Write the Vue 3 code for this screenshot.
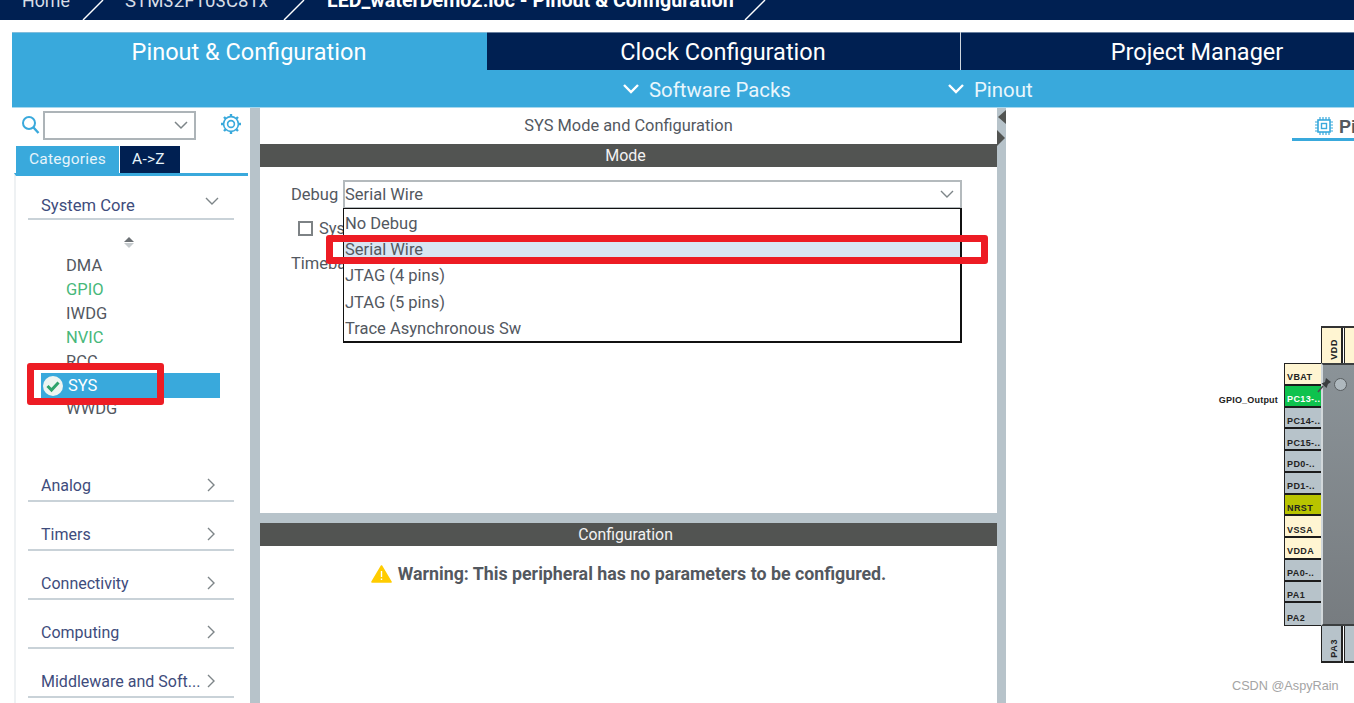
<script setup>
const sideItems = [
  { name: 'DMA' },
  { name: 'GPIO', cls: 'green' },
  { name: 'IWDG' },
  { name: 'NVIC', cls: 'green' },
  { name: 'RCC' },
  { name: 'SYS', cls: 'selected' },
  { name: 'WWDG' }
]
const groups = ['Analog', 'Timers', 'Connectivity', 'Computing', 'Middleware and Soft...']
const options = ['No Debug', 'Serial Wire', 'JTAG (4 pins)', 'JTAG (5 pins)', 'Trace Asynchronous Sw']
const pins = [
  { n: 'VBAT', c: 'power' },
  { n: 'PC13-..', c: 'active' },
  { n: 'PC14-..', c: 'io' },
  { n: 'PC15-..', c: 'io' },
  { n: 'PD0-..', c: 'io' },
  { n: 'PD1-..', c: 'io' },
  { n: 'NRST', c: 'reset' },
  { n: 'VSSA', c: 'power' },
  { n: 'VDDA', c: 'power' },
  { n: 'PA0-..', c: 'io' },
  { n: 'PA1', c: 'io' },
  { n: 'PA2', c: 'io' }
]
</script>

<template>
  <div class="app">
    <header class="crumbs">
      <span class="crumb c1">Home</span>
      <svg class="slash" width="24" height="20" viewBox="0 0 24 20"><path d="M2 20 L22 0" stroke="#fff" stroke-width="1.4" /></svg>
      <span class="crumb c2">STM32F103C8Tx</span>
      <svg class="slash" width="24" height="20" viewBox="0 0 24 20"><path d="M2 20 L22 0" stroke="#fff" stroke-width="1.4" /></svg>
      <span class="crumb c3">LED_waterDemo2.ioc - Pinout &amp; Configuration</span>
      <svg class="slash" width="24" height="20" viewBox="0 0 24 20"><path d="M2 20 L22 0" stroke="#fff" stroke-width="1.4" /></svg>
    </header>

    <div class="workspace">
      <nav class="tabs">
        <div class="tab tab-active">Pinout &amp; Configuration</div>
        <div class="tab tab-clock">Clock Configuration</div>
        <div class="tab tab-project">Project Manager</div>
      </nav>
      <div class="subbar">
        <div class="sub sub-packs">
          <svg width="18" height="12" viewBox="0 0 18 12"><path d="M2 2 L9 9 L16 2" fill="none" stroke="#fff" stroke-width="2.4" /></svg>
          <span>Software Packs</span>
        </div>
        <div class="sub sub-pinout">
          <svg width="18" height="12" viewBox="0 0 18 12"><path d="M2 2 L9 9 L16 2" fill="none" stroke="#fff" stroke-width="2.4" /></svg>
          <span>Pinout</span>
        </div>
      </div>

      <main class="main">
        <aside class="sidebar">
          <div class="search">
            <svg class="lens" width="19" height="20" viewBox="0 0 19 20"><circle cx="8" cy="8" r="6" fill="none" stroke="#39a9dc" stroke-width="2" /><path d="M12.5 12.5 L17.5 18" stroke="#39a9dc" stroke-width="2.4" /></svg>
            <div class="search-box">
              <svg width="14" height="9" viewBox="0 0 14 9"><path d="M1 1 L7 7 L13 1" fill="none" stroke="#7d8588" stroke-width="1.5" /></svg>
            </div>
            <svg class="gear" width="22" height="22" viewBox="0 0 22 22">
              <circle cx="11" cy="11" r="7.4" fill="none" stroke="#39a9dc" stroke-width="1.6" />
              <circle cx="11" cy="11" r="3.4" fill="none" stroke="#39a9dc" stroke-width="1.6" />
              <path d="M11 1v3M11 18v3M1 11h3M18 11h3M4 4l2 2M16 16l2 2M18 4l-2 2M6 16l-2 2" stroke="#39a9dc" stroke-width="2.4" />
            </svg>
          </div>
          <div class="side-tabs">
            <div class="side-tab st-on">Categories</div>
            <div class="side-tab st-off">A-&gt;Z</div>
          </div>
          <div class="side-list">
            <div class="group group-open">
              <span>System Core</span>
              <svg width="14" height="9" viewBox="0 0 14 9"><path d="M1 1 L7 7 L13 1" fill="none" stroke="#7d8588" stroke-width="1.4" /></svg>
            </div>
            <div class="scroller">
              <i class="tri-up"></i><i class="tri-down"></i>
            </div>
            <ul class="items">
              <li v-for="it in sideItems" :key="it.name" class="item" :class="it.cls">
                <svg v-if="it.cls === 'selected'" class="check" width="20" height="20" viewBox="0 0 20 20">
                  <circle cx="10" cy="10" r="10" fill="#eef5f1" />
                  <path d="M4.5 10 L8.5 14 L15.5 6.5" fill="none" stroke="#2fa36b" stroke-width="3" />
                </svg>
                <span>{{ it.name }}</span>
              </li>
            </ul>
            <div class="closed-groups">
              <div v-for="g in groups" :key="g" class="group">
                <span>{{ g }}</span>
                <svg width="9" height="14" viewBox="0 0 9 14"><path d="M1 1 L7 7 L1 13" fill="none" stroke="#7d8588" stroke-width="1.4" /></svg>
              </div>
            </div>
          </div>
        </aside>

        <section class="center">
          <div class="mode-panel">
            <div class="panel-title">SYS Mode and Configuration</div>
            <div class="bar">Mode</div>
            <div class="mode-body">
              <div class="debug-row">
                <label class="debug-label">Debug</label>
                <div class="select">
                  <span>Serial Wire</span>
                  <svg width="14" height="9" viewBox="0 0 14 9"><path d="M1 1 L7 7 L13 1" fill="none" stroke="#7d8588" stroke-width="1.4" /></svg>
                </div>
              </div>
              <div class="check-row"><i class="checkbox"></i><span>Sys</span></div>
              <div class="time-row">Timeba</div>
              <ul class="dropdown">
                <li v-for="o in options" :key="o" class="option" :class="{ hot: o === 'Serial Wire' }">{{ o }}</li>
              </ul>
            </div>
          </div>
          <div class="config-panel">
            <div class="bar bar-config">Configuration</div>
            <div class="warning">
              <svg width="21" height="18" viewBox="0 0 21 18"><path d="M10.5 1 L20 17 L1 17 Z" fill="#ffcc00" stroke="#ffcc00" stroke-width="1.6" stroke-linejoin="round" /><path d="M10.5 6 V12 M10.5 13.5 V15" stroke="#fff" stroke-width="1.4" /></svg>
              <span>Warning: This peripheral has no parameters to be configured.</span>
            </div>
          </div>
        </section>

        <div class="gutter">
          <i class="arrow-left"></i>
          <i class="arrow-right"></i>
        </div>

        <section class="right">
          <div class="pin-tab">
            <svg width="18" height="18" viewBox="0 0 18 18">
              <rect x="3" y="3" width="12" height="12" fill="none" stroke="#39a9dc" stroke-width="1.6" />
              <rect x="6.5" y="6.5" width="5" height="5" fill="none" stroke="#39a9dc" stroke-width="1.4" />
              <path d="M5 0v3M8 0v3M11 0v3M14 0v3M5 15v3M8 15v3M11 15v3M14 15v3M0 5h3M0 8h3M0 11h3M0 14h3M15 5h3M15 8h3M15 11h3M15 14h3" stroke="#39a9dc" stroke-width="1.2" />
            </svg>
            <b>Pi</b>
          </div>
          <div class="diagram">
            <div class="top-pins">
              <div class="vpin power"><span>VDD</span></div>
              <div class="vpin power"><span></span></div>
            </div>
            <div class="out-label">GPIO_Output</div>
            <div class="pins">
              <div v-for="p in pins" :key="p.n" class="pin" :class="p.c">{{ p.n }}</div>
            </div>
            <div class="chip">
              <i class="dot"></i>
              <svg class="push" width="16" height="16" viewBox="0 0 16 16"><path d="M9 1 L14 5 L11 7 L9.5 11 L4.5 6.5 L8 5 Z" fill="#3a3d3f" /><path d="M6 9 L1 15" stroke="#4a4d4f" stroke-width="1.6" /></svg>
            </div>
            <div class="bottom-pins">
              <div class="vpin io"><span>PA3</span></div>
              <div class="vpin io"><span></span></div>
            </div>
          </div>
        </section>
      </main>
    </div>

    <div class="red red-sys"></div>
    <div class="red red-serial"></div>
    <div class="watermark">CSDN @AspyRain</div>
  </div>
</template>

<style>
html, body { margin: 0; padding: 0; overflow: hidden; background: #fff; }
</style>

<style scoped>
.app {
  position: relative;
  width: 1354px;
  height: 703px;
  overflow: hidden;
  background: #fff;
  font-family: Roboto, "Liberation Sans", sans-serif;
  color: #53585f;
}
.crumbs {
  height: 20px;
  background: #002052;
  display: flex;
  align-items: flex-end;
  overflow: hidden;
  color: #fff;
}
.crumb { line-height: 20px; position: relative; top: -9px; white-space: nowrap; }
.c1 { margin-left: 22px; width: 59px; color: #d7dde6; font-size: 17.8px; }
.c2 { margin-left: 20px; width: 157px; color: #d7dde6; font-size: 18.6px; }
.c3 { margin-left: 21px; width: 416px; font-weight: 700; font-size: 19.7px; }
.slash { flex: none; }

.workspace { margin: 12px 0 0 12px; height: 671px; display: flex; flex-direction: column; }
.tabs { height: 38px; display: flex; flex: none; }
.tab {
  display: flex; align-items: center; justify-content: center;
  color: #fff; font-size: 23.5px; font-weight: 400; padding-top: 1px; box-sizing: border-box;
  box-shadow: inset 0 1px 0 rgba(190, 205, 220, 0.55);
}
.tab-active { width: 475px; background: #39a9dc; padding-right: 1px; }
.tab-clock { width: 474px; background: #002052; border-right: 1px solid #cfd6de; padding-right: 1px; }
.tab-project { flex: 1; background: #002052; padding-left: 79px; }
.subbar { height: 37px; flex: none; background: #39a9dc; display: flex; color: #e9f6fc; font-size: 20.4px; border-bottom: 1px solid #a7d8ee; box-sizing: content-box; }
.sub { display: flex; align-items: center; gap: 9px; }
.sub-packs { margin-left: 610px; width: 325px; }
.sub span { position: relative; top: 1px; }
.sub svg { flex: none; }

.main { flex: 1; display: flex; min-height: 0; }
.sidebar { width: 238px; flex: none; border-right: 10px solid #b7c3ca; box-sizing: content-box; background: #fff; display: flex; flex-direction: column; }
.search { height: 34px; flex: none; display: flex; align-items: flex-start; padding: 2px 0 0 9px; box-sizing: border-box; }
.lens { margin-top: 5px; }
.search-box {
  margin-left: 3px; margin-top: 1px; border: 2px solid #adb4b8; width: 153px; height: 29px;
  display: flex; align-items: center; justify-content: flex-end; padding-right: 6px; box-sizing: border-box;
}
.gear { margin: 3px 0 0 24px; }
.side-tabs { display: flex; height: 27px; margin: 4px 0 0 4px; flex: none; }
.side-tab { display: flex; align-items: center; justify-content: center; color: #e6f4fb; font-size: 15.5px; letter-spacing: 0.25px; padding-bottom: 1px; box-sizing: border-box; }
.st-on { width: 103px; background: #39a9dc; }
.st-off { width: 60px; background: #002052; margin-left: 1px; padding-right: 3px; }
.side-list {
  flex: 1; margin: 0 2px 0 2px; border-top: 3px solid #39a9dc; padding: 0 14px 0 12px; border-left: 2px solid #eef1f3;
  background: #fff; box-sizing: border-box; min-height: 0; overflow: hidden;
}
.group {
  height: 37px; box-sizing: border-box; display: flex; justify-content: space-between; align-items: flex-end;
  border-bottom: 2px solid #c9d2d8; padding: 0 15px 5px 13px; font-size: 16px; color: #3e4c7c; margin-top: 12px; white-space: nowrap;
}
.group-open { height: 44px; margin-top: 0; padding-bottom: 3px; font-size: 16.6px; }
.group-open svg { margin-bottom: 9px; }
.closed-groups .group { height: 37px; }
.closed-groups .group svg { margin-bottom: 3px; margin-right: 3px; }
.closed-groups .group:first-child { margin-top: 0; }
.scroller { display: flex; flex-direction: column; align-items: center; gap: 1px; height: 24px; padding: 17px 0 0 0; padding-right: 4px; box-sizing: content-box; }
.tri-up { width: 0; height: 0; border-left: 5px solid transparent; border-right: 5px solid transparent; border-bottom: 5px solid #6c7175; }
.tri-down { width: 0; height: 0; border-left: 5px solid transparent; border-right: 5px solid transparent; border-top: 5px solid #c6cbce; }
.items { list-style: none; margin: -7px 0 0 0; padding: 0; height: 211px; }
.item { height: 24px; line-height: 24px; font-size: 16.5px; padding-left: 38px; color: #53585f; }
.item.green { color: #47b87a; }
.item.selected {
  height: 25px; margin: -1px 0 -1px 13px; padding-left: 2px; width: 179px; box-sizing: border-box; background: #39a9dc; color: #fff;
  display: flex; align-items: center; gap: 5px; position: relative;
}
.check { flex: none; }

.center { width: 737px; flex: none; display: flex; flex-direction: column; background: #b7c3ca; }
.mode-panel { height: 405px; flex: none; background: #fff; display: flex; flex-direction: column; }
.panel-title { height: 35px; flex: none; display: flex; align-items: center; justify-content: center; font-size: 16.4px; color: #53585f; padding-bottom: 1px; box-sizing: content-box; }
.bar { height: 23px; flex: none; background: #525452; color: #f2f2f2; font-size: 16px; display: flex; align-items: center; justify-content: center; padding-right: 6px; }
.bar-config { font-size: 15.8px; }
.mode-body { position: relative; flex: 1; }
.debug-row { display: flex; align-items: center; padding: 13px 0 0 31px; }
.debug-label { width: 52px; font-size: 16.5px; color: #53585f; }
.select {
  width: 619px; height: 29px; border: 2px solid #b4babd; box-sizing: border-box; font-size: 16.5px; color: #53585f;
  display: flex; align-items: center; justify-content: space-between; padding: 0 6px 0 0;
}
.check-row { display: flex; align-items: center; gap: 6px; padding: 10px 0 0 38px; font-size: 16.5px; }
.checkbox { display: block; width: 15px; height: 15px; border: 2px solid #7d8285; box-sizing: border-box; flex: none; }
.time-row { padding: 16px 0 0 31px; font-size: 16.5px; }
.dropdown {
  position: absolute; left: 83px; top: 41px; width: 619px; height: 135px; margin: 0; padding: 2px 0 0 0; list-style: none;
  border: 2px solid #111; border-width: 1px 2px 2px 1px; box-sizing: border-box; background: #fff;
}
.option { height: 26.2px; line-height: 26px; font-size: 16.5px; padding-left: 1px; color: #53585f; white-space: nowrap; }
.option.hot { background: #d8e6f3; }

.config-panel { margin-top: 10px; flex: 1; background: #fff; }
.warning { display: flex; justify-content: center; align-items: center; gap: 6px; padding: 17px 0 0 0; font-size: 17.8px; font-weight: 700; color: #53585f; }

.gutter { width: 9px; flex: none; background: #b7c3ca; display: flex; flex-direction: column; gap: 6px; padding-top: 2px; box-sizing: border-box; }
.arrow-left { width: 0; height: 0; border-top: 7px solid transparent; border-bottom: 7px solid transparent; border-right: 8px solid #525452; margin-left: 1px; }
.arrow-right { width: 0; height: 0; border-top: 8px solid transparent; border-bottom: 8px solid transparent; border-left: 8px solid #525452; }

.right { flex: 1; background: #fff; min-width: 0; overflow: hidden; }
.pin-tab {
  margin: 9px 0 0 286px; height: 21px; border-bottom: 3px solid #39a9dc; display: flex; align-items: flex-start; gap: 6px;
  padding-left: 23px; font-size: 18px; color: #53585f; font-family: "Liberation Sans", sans-serif; white-space: nowrap;
}
.pin-tab svg { flex: none; }
.diagram {
  margin-top: 185px;
  display: grid;
  grid-template-columns: 278px 37px 33px;
  grid-template-rows: 37px 263px 37px;
}
.top-pins { grid-column: 3; grid-row: 1; display: flex; gap: 1px; border-top: 2px solid #333; box-sizing: border-box; }
.bottom-pins { grid-column: 3; grid-row: 3; display: flex; gap: 1px; }
.vpin { width: 22px; flex: none; border: 1px solid #222; border-width: 0 2px 2px 1px; box-sizing: border-box; display: flex; align-items: flex-end; justify-content: center; font: 700 9px "Liberation Sans", sans-serif; color: #222; padding: 0 0 3px 5px; }
.top-pins .vpin { border-width: 0 2px 0 1px; }
.vpin span { writing-mode: vertical-rl; transform: rotate(180deg); letter-spacing: 0.6px; }
.out-label { grid-column: 1; grid-row: 2; text-align: right; padding: 32px 6px 0 0; font: 700 9px "Liberation Sans", sans-serif; letter-spacing: 0.2px; color: #222; }
.pins { grid-column: 2; grid-row: 2; display: flex; flex-direction: column; border: 1px solid #222; border-right: 0; box-sizing: border-box; }
.pin {
  height: 21.8px; box-sizing: border-box; border-bottom: 2px solid #1c1c1c; display: flex; align-items: center;
  padding: 7px 0 0 2px; font: 700 9px "Liberation Sans", sans-serif; letter-spacing: 0.4px; color: #222; white-space: nowrap; overflow: hidden;
}
.pin:last-child { border-bottom: 0; }
.power { background: #fff5d2; }
.io { background: #b7c3ca; }
.active { background: #0ec24d; color: #fff; }
.reset { background: #b8c400; }
.chip {
  grid-column: 3; grid-row: 2; position: relative; box-sizing: border-box; width: 40px;
  border: 2px solid #3c3f40; border-right: 0; border-left-color: #d2d8db;
  background: linear-gradient(180deg, #8b9398 0%, #777c80 100%);
}
.dot { position: absolute; left: 11px; top: 13px; width: 11px; height: 11px; border-radius: 50%; background: #aeb8be; border: 1px solid #5a5f62; }
.push { position: absolute; left: -6px; top: 12px; }

.red { position: absolute; border: 7px solid #ed1c24; border-radius: 3px; box-sizing: border-box; }
.red-sys { left: 27px; top: 363px; width: 137px; height: 42px; }
.red-serial { left: 326px; top: 235px; width: 662px; height: 29px; }
.watermark { position: absolute; left: 1232px; top: 679px; font: 12.7px "Liberation Sans", sans-serif; color: #a4a4a4; white-space: nowrap; }
</style>
